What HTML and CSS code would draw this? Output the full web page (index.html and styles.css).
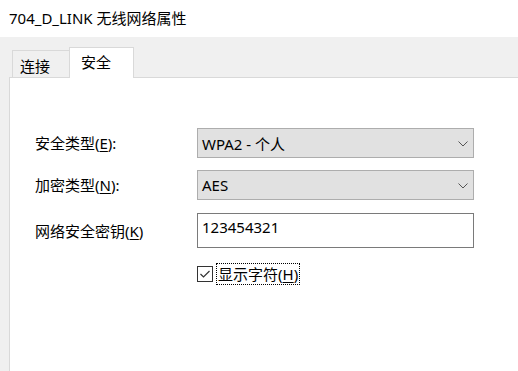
FILE: index.html
```html
<!DOCTYPE html>
<html lang="zh-CN">
<head>
<meta charset="utf-8">
<title>704_D_LINK 无线网络属性</title>
<link rel="stylesheet" href="styles.css">
</head>
<body>
<div class="window">
  <div class="titlebar">704_D_LINK 无线网络属性</div>
  <div class="tabstrip">
    <div class="tab">连接</div>
    <div class="tab active">安全</div>
  </div>
  <div class="panel">
    <div class="form">
      <div class="row row-select">
        <div class="label">安全类型(<u>E</u>):</div>
        <div class="select">
          <span class="value">WPA2 - 个人</span>
          <svg class="chev" width="10" height="6" viewBox="0 0 10 6"><path d="M0.5 0.5 L5 5 L9.5 0.5" fill="none" stroke="#555" stroke-width="1"/></svg>
        </div>
      </div>
      <div class="row row-select second">
        <div class="label">加密类型(<u>N</u>):</div>
        <div class="select">
          <span class="value">AES</span>
          <svg class="chev" width="10" height="6" viewBox="0 0 10 6"><path d="M0.5 0.5 L5 5 L9.5 0.5" fill="none" stroke="#555" stroke-width="1"/></svg>
        </div>
      </div>
      <div class="row row-text">
        <div class="label">网络安全密钥(<u>K</u>)</div>
        <div class="textbox">123454321</div>
      </div>
      <div class="row row-check">
        <div class="label"></div>
        <div class="check">
          <span class="box"><svg width="14" height="14" viewBox="0 0 14 14"><path d="M2.5 7 L5.5 10 L11.5 4" fill="none" stroke="#333" stroke-width="1.2"/></svg></span>
          <span class="check-label">显示字符(<u>H</u>)</span>
        </div>
      </div>
    </div>
  </div>
</div>
</body>
</html>
```

FILE: styles.css
```css
* { box-sizing: border-box; }
html, body { margin: 0; padding: 0; }
body {
  width: 518px;
  height: 371px;
  overflow: hidden;
  background: #f0f0f0;
  font-family: "Noto Sans", "Noto Sans CJK SC", sans-serif;
  font-size: 15px;
  color: #000;
}
.window {
  display: flex;
  flex-direction: column;
  height: 371px;
}
.titlebar {
  height: 37px;
  background: #fff;
  padding-left: 9px;
  line-height: 36px;
  white-space: nowrap;
}
.tabstrip {
  height: 40px;
  display: flex;
  align-items: flex-end;
  padding-left: 12px;
}
.tab {
  height: 27px;
  width: 57px;
  border: 1px solid #d9d9d9;
  border-bottom: none;
  border-right: none;
  background: #f0f0f0;
  padding-left: 7px;
  padding-top: 4px;
  line-height: 22px;
}
.tab.active {
  height: 31px;
  width: 65px;
  margin-bottom: -1px;
  border-right: 1px solid #d9d9d9;
  background: #fff;
  padding-left: 11px;
  padding-top: 3px;
  position: relative;
  z-index: 1;
}
.panel {
  flex: 1;
  margin-left: 9px;
  background: #fff;
  border-left: 1px solid #d9d9d9;
  border-top: 1px solid #d9d9d9;
  padding-left: 25px;
  padding-top: 50px;
}
.form {
  display: flex;
  flex-direction: column;
}
.row {
  display: grid;
  grid-template-columns: 162px 277px;
  align-items: center;
}
.label {
  line-height: 20px;
  white-space: nowrap;
}
.row-select { height: 30px; }
.row-select.second { margin-top: 12px; }
.select {
  height: 30px;
  background: #e1e1e1;
  border: 1px solid #adadad;
  display: flex;
  align-items: center;
  justify-content: space-between;
  padding-left: 4px;
  padding-right: 5px;
}
.chev { margin-top: 1px; }
.row-text {
  margin-top: 13px;
  height: 35px;
}
.row-text .label { margin-top: 0; }
.textbox {
  height: 35px;
  border: 1px solid #7a7a7a;
  padding-left: 4px;
  padding-top: 3px;
  line-height: 20px;
}
.row-check {
  margin-top: 15px;
  height: 22px;
}
.check {
  display: flex;
  align-items: center;
}
.box {
  width: 16px;
  height: 16px;
  border: 1px solid #333;
  background: #fff;
  display: flex;
  align-items: center;
  justify-content: center;
}
.check-label {
  margin-left: 3px;
  height: 22px;
  line-height: 20px;
  padding: 0 1px;
  border: 1px dotted #000;
}
u { text-underline-offset: 2px; }
```
